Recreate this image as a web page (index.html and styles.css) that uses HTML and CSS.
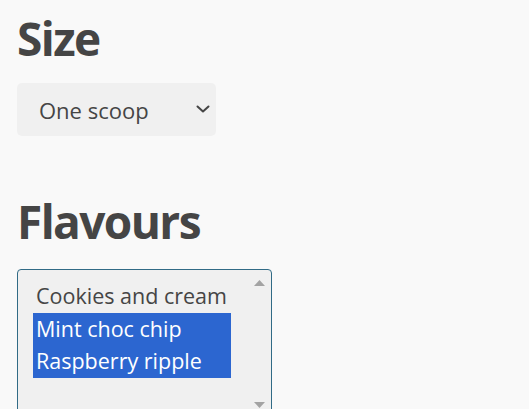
FILE: index.html
```html
<!DOCTYPE html>
<html lang="en">
<head>
<meta charset="utf-8">
<title>Ice cream</title>
<link rel="stylesheet" href="styles.css">
</head>
<body>
<main class="form">
  <section class="field">
    <h1 class="heading">Size</h1>
    <div class="select-wrap">
      <select class="select" aria-label="Size">
        <option>One scoop</option>
        <option>Two scoops</option>
        <option>Three scoops</option>
      </select>
      <svg class="chevron" width="14" height="8" viewBox="0 0 14 8" aria-hidden="true">
        <path d="M1.5 1.5 L7 6.5 L12.5 1.5" fill="none" stroke="#454545" stroke-width="2" stroke-linecap="round" stroke-linejoin="round"/>
      </svg>
    </div>
  </section>
  <section class="field field-flavours">
    <h1 class="heading">Flavours</h1>
    <div class="listbox" role="listbox" aria-multiselectable="true" aria-label="Flavours">
      <div class="options">
        <div class="option" role="option">Cookies and cream</div>
        <div class="option selected" role="option" aria-selected="true">Mint choc chip</div>
        <div class="option selected" role="option" aria-selected="true">Raspberry ripple</div>
      </div>
      <div class="scrollbar" aria-hidden="true">
        <svg class="arrow" width="11" height="6" viewBox="0 0 11 6"><path d="M0 6 L5.5 0 L11 6 Z" fill="#a3a3a3"/></svg>
        <svg class="arrow" width="11" height="6" viewBox="0 0 11 6"><path d="M0 0 L5.5 6 L11 0 Z" fill="#a3a3a3"/></svg>
      </div>
    </div>
  </section>
</main>
</body>
</html>
```

FILE: styles.css
```css
html, body {
  margin: 0;
  padding: 0;
  background: #f9f9f9;
  overflow: hidden;
}

body {
  font-family: "Open Sans", "Noto Sans", sans-serif;
  color: #454545;
}

.form {
  padding: 7px 17px 0;
  display: flex;
  flex-direction: column;
}

.heading {
  margin: 0;
  font-size: 46px;
  line-height: 62px;
  font-weight: 700;
  letter-spacing: -1.6px;
}

.field-flavours {
  margin-top: 54px;
}

.select-wrap {
  position: relative;
  width: 199px;
  height: 53px;
  margin-top: 14px;
}

.select {
  appearance: none;
  -webkit-appearance: none;
  width: 100%;
  height: 100%;
  border: none;
  border-radius: 5px;
  background: #f0f0f0;
  color: #454545;
  font-family: inherit;
  font-size: 22px;
  padding: 0 0 0 22px;
  margin: 0;
  outline: none;
}

.chevron {
  position: absolute;
  right: 6px;
  top: 22px;
  pointer-events: none;
}

.listbox {
  margin-top: 17px;
  width: 255px;
  height: 150px;
  border: 1px solid #316b86;
  border-radius: 4px;
  background: #f0f0f0;
  display: flex;
  box-sizing: border-box;
  overflow: hidden;
}

.options {
  flex: 1;
  padding: 10px 0 0 15px;
  font-size: 21.5px;
}

.option {
  height: 32.5px;
  line-height: 32.5px;
  padding-left: 3px;
  width: 198px;
  box-sizing: border-box;
  white-space: nowrap;
}

.option.selected {
  background: #2c66d0;
  color: #ffffff;
}

.scrollbar {
  width: 23px;
  padding: 10px 0;
  display: flex;
  flex-direction: column;
  justify-content: space-between;
  align-items: center;
  box-sizing: border-box;
}
```
